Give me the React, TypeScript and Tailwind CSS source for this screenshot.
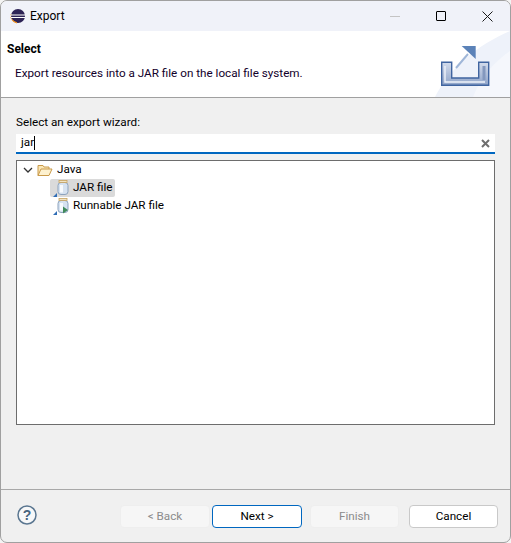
const font = "font-['Roboto','Liberation_Sans',sans-serif]"

function EclipseLogo() {
	return (
		<svg width="16" height="16" viewBox="0 0 16 16">
			<circle cx="8" cy="8" r="7" fill="#2c2255" />
			<path d="M1.200 6.300a7 7 0 0 0-.1 1 M1 8.900a7 7 0 0 0 .4 1.500 M2 11.500a7 7 0 0 0 5 3.400" stroke="#f7941e" strokeWidth="1.200" fill="none" />
			<path d="M1 6.600h14v1H1zM1 9h14v1H1z" fill="#fff" />
		</svg>
	)
}

function ExportBanner() {
	return (
		<svg width="75" height="66" viewBox="0 0 75 66">
			<defs>
				<linearGradient id="trayFill" x1="0" y1="0" x2="0" y2="1">
					<stop offset="0" stopColor="#d3dcec" />
					<stop offset="1" stopColor="#8ea3c8" />
				</linearGradient>
			</defs>
			<path d="M75 0v66H0C14 38 42 14 75 0z" fill="#eef2fa" />
			<path d="M75 20v46H38C46 46 58 32 75 20z" fill="#f5f7fc" />
			<path d="M6.700 54.300V31.300h10v15.700h27V31.300h10v23z" fill="url(#trayFill)" stroke="#3f64a0" strokeWidth="1.400" />
			<path d="M10 35v16h40" fill="none" stroke="#f0f3fa" strokeWidth="1.400" />
			<path d="M49 35v14" fill="none" stroke="#8398be" strokeWidth="3" />
			<path d="M21 37L33 23" stroke="#9fb6d8" strokeWidth="2" />
			<path d="M26.700 15h14v13z" fill="#5b82b8" />
		</svg>
	)
}

function JarIcon(props: { runnable?: boolean }) {
	return (
		<svg className="shrink-0" width="20" height="18" viewBox="0 0 20 18">
			<rect x="8" y="3.500" width="10" height="12" rx="3" fill="#d6e2f0" stroke="#8da3bd" />
			<rect x="10" y="6" width="3" height="7.500" fill="#f7fafd" />
			<rect x="9" y="1.500" width="8" height="2" fill="#f0e3c4" stroke="#c9a45f" strokeWidth="0.800" />
			<path d="M3 18h4v-4z" fill="#2f6db5" />
			{props.runnable ? <path d="M13 9.500l5 3.500-5 3.500z" fill="#3f8a5a" /> : null}
		</svg>
	)
}

function WizardButton(props: { label: string; primary?: boolean; disabled?: boolean; width: string }) {
	let look = "bg-white border-[#c9c9c9] text-black"
	if (props.primary) look = "bg-white border-[#0067c0] text-black"
	if (props.disabled) look = "bg-[#f6f6f6] border-[#eeeeee] text-[#8b8b8b]"
	return (
		<button className={`h-[23px] pt-px rounded-[4px] border leading-none ${props.width} ${look}`}>
			{props.label}
		</button>
	)
}

export default function App() {
	return (
		<div className={`${font} w-[511px] h-[543px] overflow-hidden bg-[#f4f4f4] text-[11.7px] text-black whitespace-nowrap`}>
			<div className="h-full flex flex-col rounded-[7px] border border-[#a0a0a0] bg-[#f0f0f0] overflow-hidden">
				<div className="h-[30px] shrink-0 flex items-center bg-[#f0f2f9]">
					<div className="ml-[9px]">
						<EclipseLogo />
					</div>
					<span className="ml-[4px] text-[12px]">Export</span>
					<div className="ml-auto flex items-center">
						<div className="w-[46px] flex justify-center">
							<div className="w-[10px] h-px bg-[#c4c4c4]" />
						</div>
						<div className="w-[46px] flex justify-center">
							<div className="w-[10px] h-[10px] rounded-[1px] border border-black" />
						</div>
						<div className="w-[46px] flex justify-center">
							<svg width="11" height="11" viewBox="0 0 11 11">
								<path d="M.5.5l10 10M10.500.5l-10 10" stroke="#1a1a1a" strokeWidth="1" />
							</svg>
						</div>
					</div>
				</div>
				<div className="h-[66px] shrink-0 flex justify-between bg-white">
					<div className="pl-[6px] pt-[10px]">
						<div className="font-bold text-[12px] leading-[16px]">Select</div>
						<div className="pl-[8px] mt-[8px] leading-[16px] text-[#12002a]">
							Export resources into a JAR file on the local file system.
						</div>
					</div>
					<ExportBanner />
				</div>
				<div className="h-px shrink-0 bg-[#a0a0a0]" />
				<div className="flex-1 flex flex-col px-[15px] pt-[16px]">
					<div className="leading-[16px] pb-[4px]">Select an export wizard:</div>
					<div className="h-[20px] shrink-0 flex items-center bg-white border-b-2 border-[#0067c0] pl-[5px] pr-[5px]">
						<span className="leading-none">jar</span>
						<span className="w-px h-[14px] bg-black" />
						<svg className="ml-auto" width="9" height="9" viewBox="0 0 9 9">
							<path d="M1 1l7 7M8 1l-7 7" stroke="#6e6e6e" strokeWidth="2" />
						</svg>
					</div>
					<div className="h-[265px] mt-[6px] shrink-0 border border-[#6d6d6d] bg-white">
						<div className="flex items-center h-[17px] pt-px pl-[6px]">
							<svg width="10" height="6" viewBox="0 0 10 6">
								<path d="M1 1l4 4 4-4" fill="none" stroke="#333" strokeWidth="1.300" />
							</svg>
							<svg className="ml-[4px]" width="16" height="14" viewBox="0 0 16 14">
								<path d="M1 12.500V2.500h5l1 1.500h5v2" fill="#fbe7b5" stroke="#c99a4a" />
								<path d="M1 12.500l3-6.500h11l-3 6.500z" fill="#fdf1cf" stroke="#c99a4a" />
							</svg>
							<span className="ml-[4px]">Java</span>
						</div>
						<div className="ml-[33px] mt-[1px] w-[65px] h-[18px] flex items-center rounded-[2px] bg-[#dadada]">
							<JarIcon />
							<span className="ml-[3px]">JAR file</span>
						</div>
						<div className="ml-[33px] h-[18px] flex items-center">
							<JarIcon runnable />
							<span className="ml-[3px]">Runnable JAR file</span>
						</div>
					</div>
				</div>
				<div className="h-px shrink-0 bg-[#a8a8a8]" />
				<div className="h-[52px] shrink-0 flex items-start pl-[16px] pr-[12px] pt-[15px]">
					<svg width="20" height="20" viewBox="0 0 20 20">
						<circle cx="10" cy="10" r="9" fill="#f7f8f9" stroke="#5a7690" strokeWidth="1.500" />
						<text x="10" y="15" textAnchor="middle" fontSize="14" fontWeight="700" fill="#47647e" fontFamily="Liberation Sans">?</text>
					</svg>
					<div className="ml-auto flex">
						<WizardButton label="< Back" disabled width="w-[90px]" />
						<div className="ml-[2px]">
							<WizardButton label="Next >" primary width="w-[90px]" />
						</div>
						<div className="ml-[8px]">
							<WizardButton label="Finish" disabled width="w-[89px]" />
						</div>
						<div className="ml-[10px]">
							<WizardButton label="Cancel" width="w-[89px]" />
						</div>
					</div>
				</div>
			</div>
		</div>
	)
}
